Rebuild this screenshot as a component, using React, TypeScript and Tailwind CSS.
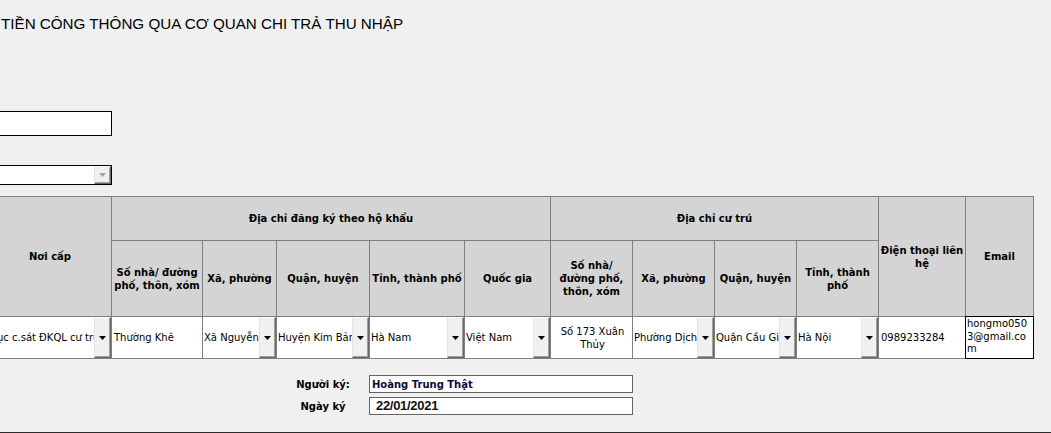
import type { ReactNode } from 'react'

const TABLE_COLS =
  'grid-cols-[122px_90px_73px_92px_94px_85px_81px_81px_81px_81px_86px_67px]'

function Arrow({ muted = false }: { muted?: boolean }) {
  return (
    <svg width="7" height="4" viewBox="0 0 7 4" aria-hidden>
      <path d="M0 0h7L3.5 4z" fill={muted ? '#a3a3a3' : '#000'} />
    </svg>
  )
}

function DropButton({ muted = false }: { muted?: boolean }) {
  return (
    <div className="flex w-[17px] shrink-0 items-center justify-center self-stretch border border-t-[#fcfcfc] border-l-[#e3e3e3] border-r-[#696969] border-b-[#696969] bg-[#f0f0f0] shadow-[inset_-1px_-1px_0_#a0a0a0]">
      <Arrow muted={muted} />
    </div>
  )
}

function HeadCell({ children, className = '' }: { children: ReactNode; className?: string }) {
  return (
    <div
      className={`flex items-center justify-center whitespace-nowrap bg-[#d4d4d4] text-center font-bold leading-[13px] text-black ${className}`}
    >
      <div>{children}</div>
    </div>
  )
}

function SelectCell({ value }: { value: string }) {
  return (
    <div className="flex items-center bg-white">
      <span className="min-w-0 flex-1 overflow-hidden whitespace-nowrap pl-[1px]">{value}</span>
      <DropButton />
    </div>
  )
}

function TextCell({ children, className = '' }: { children: ReactNode; className?: string }) {
  return <div className={`flex items-center bg-white pl-[2px] ${className}`}>{children}</div>
}

export default function App() {
  return (
    <div className="h-[433px] w-[1051px] overflow-hidden bg-[#f0f0f0] font-['DejaVu_Sans',sans-serif] text-[10px] text-black">
      <div className="whitespace-nowrap pl-[1px] pt-[15px] font-['Liberation_Sans',Arial,sans-serif] text-[15.2px] leading-[17px]">
        TIỀN CÔNG THÔNG QUA CƠ QUAN CHI TRẢ THU NHẬP
      </div>

      <div className="-ml-[20px] mt-[79px] h-[25px] w-[132px] border border-black bg-white" />

      <div className="-ml-[20px] mt-[29px] flex h-[20px] w-[132px] justify-end border border-black bg-white">
        <DropButton muted />
      </div>

      <div className={`-ml-[12px] mt-[11px] grid w-[1046px] ${TABLE_COLS} grid-rows-[43px_75px_41px] gap-[1px] bg-[#7f7f7f] p-[1px]`}>
        <HeadCell className="row-span-2">Nơi cấp</HeadCell>
        <HeadCell className="col-span-5">Địa chỉ đăng ký theo hộ khẩu</HeadCell>
        <HeadCell className="col-span-4">Địa chỉ cư trú</HeadCell>
        <HeadCell className="row-span-2">
          Điện thoại liên
          <br />
          hệ
        </HeadCell>
        <HeadCell className="row-span-2">Email</HeadCell>

        <HeadCell>
          Số nhà/ đường
          <br />
          phố, thôn, xóm
        </HeadCell>
        <HeadCell>Xã, phường</HeadCell>
        <HeadCell>Quận, huyện</HeadCell>
        <HeadCell>Tỉnh, thành phố</HeadCell>
        <HeadCell>Quốc gia</HeadCell>
        <HeadCell>
          Số nhà/
          <br />
          đường phố,
          <br />
          thôn, xóm
        </HeadCell>
        <HeadCell>Xã, phường</HeadCell>
        <HeadCell>Quận, huyện</HeadCell>
        <HeadCell>
          Tỉnh, thành
          <br />
          phố
        </HeadCell>

        <SelectCell value="Cục c.sát ĐKQL cư trú và DLQG về dân cư" />
        <TextCell>Thường Khê</TextCell>
        <SelectCell value="Xã Nguyễn Úy" />
        <SelectCell value="Huyện Kim Bảng" />
        <SelectCell value="Hà Nam" />
        <SelectCell value="Việt Nam" />
        <TextCell className="justify-center pl-0 text-center leading-[13px]">
          <div>
            Số 173 Xuân
            <br />
            Thủy
          </div>
        </TextCell>
        <SelectCell value="Phường Dịch Vọng Hậu" />
        <SelectCell value="Quận Cầu Giấy" />
        <SelectCell value="Hà Nội" />
        <TextCell>0989233284</TextCell>
        <div className="break-all bg-white pl-[1px] pr-[3px] pt-[1px] leading-[12.5px] outline outline-1 outline-black">
          hongmo0503@gmail.com
        </div>
      </div>

      <div className="mt-[16px] flex flex-col gap-[4px]">
        <div className="flex h-[18px] items-center">
          <div className="ml-[283px] w-[80px] text-center font-bold">Người ký:</div>
          <div className="ml-[6px] flex h-[18px] w-[264px] items-center border border-[#646464] bg-white pl-[2px] font-bold text-[#0b0b3b]">
            Hoàng Trung Thật
          </div>
        </div>
        <div className="flex h-[18px] items-center">
          <div className="ml-[283px] w-[80px] text-center font-bold">Ngày ký</div>
          <div className="ml-[6px] flex h-[18px] w-[264px] items-center border border-[#646464] bg-white pl-[6px] font-['Liberation_Sans',Arial,sans-serif] text-[13px] font-bold tracking-[-0.3px] text-[#111]">
            22/01/2021
          </div>
        </div>
      </div>

      <div className="mt-[17px] h-[2px] w-full bg-[#2b2b2b]" />
    </div>
  )
}
